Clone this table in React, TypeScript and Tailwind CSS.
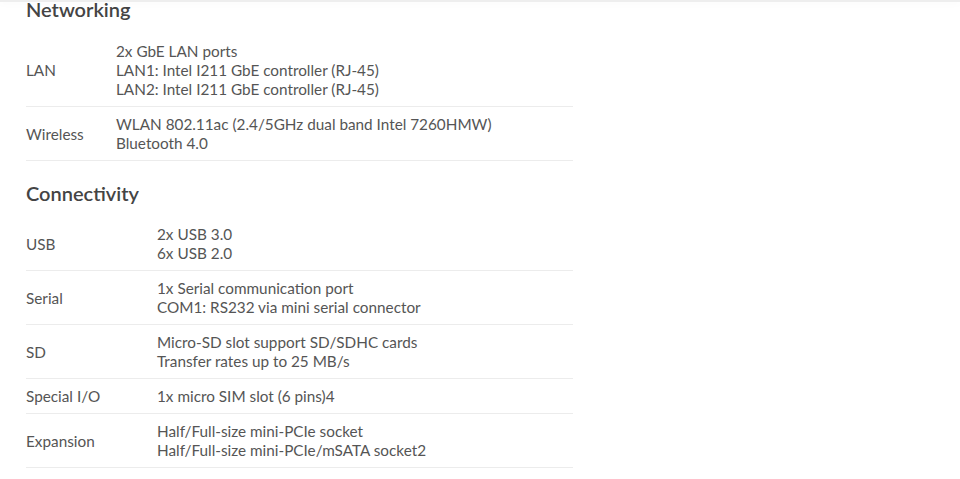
import React from "react";

type Row = { label: string; values: string[] };

const networking: Row[] = [
  {
    label: "LAN",
    values: [
      "2x GbE LAN ports",
      "LAN1: Intel I211 GbE controller (RJ-45)",
      "LAN2: Intel I211 GbE controller (RJ-45)",
    ],
  },
  {
    label: "Wireless",
    values: ["WLAN 802.11ac (2.4/5GHz dual band Intel 7260HMW)", "Bluetooth 4.0"],
  },
];

const connectivity: Row[] = [
  { label: "USB", values: ["2x USB 3.0", "6x USB 2.0"] },
  {
    label: "Serial",
    values: ["1x Serial communication port", "COM1: RS232 via mini serial connector"],
  },
  {
    label: "SD",
    values: ["Micro-SD slot support SD/SDHC cards", "Transfer rates up to 25 MB/s"],
  },
  { label: "Special I/O", values: ["1x micro SIM slot (6 pins)4"] },
  {
    label: "Expansion",
    values: ["Half/Full-size mini-PCIe socket", "Half/Full-size mini-PCIe/mSATA socket2"],
  },
];

function SpecTable({ rows, labelWidth }: { rows: Row[]; labelWidth: string }) {
  return (
    <div className="w-[547px]">
      {rows.map((r) => (
        <div key={r.label} className="flex items-center border-b border-[#ececec] pt-2 pb-[7px]">
          <div className={labelWidth}>{r.label}</div>
          <div className="flex flex-col">
            {r.values.map((v) => (
              <div key={v}>{v}</div>
            ))}
          </div>
        </div>
      ))}
    </div>
  );
}

export default function App() {
  return (
    <div
      className="relative w-[960px] h-[479px] overflow-hidden bg-white text-[15.3px] leading-[19px] text-[#555]"
      style={{ fontFamily: "Lato, 'Open Sans', sans-serif" }}
    >
      <div className="absolute top-0 left-0 right-0 h-[2px] bg-[#eeeeee] shadow-[0_2px_6px_rgba(0,0,0,0.04)]" />
      <div className="pl-[26px] -mt-[3px]">
        <h2 className="text-[20px] leading-[24px] font-semibold text-[#444]">Networking</h2>
        <div className="mt-[13px]">
          <SpecTable rows={networking} labelWidth="w-[90px] shrink-0" />
        </div>
        <h2 className="mt-[20px] text-[20px] leading-[24px] font-semibold text-[#444]">Connectivity</h2>
        <div className="mt-[12px]">
          <SpecTable rows={connectivity} labelWidth="w-[131px] shrink-0" />
        </div>
      </div>
    </div>
  );
}
